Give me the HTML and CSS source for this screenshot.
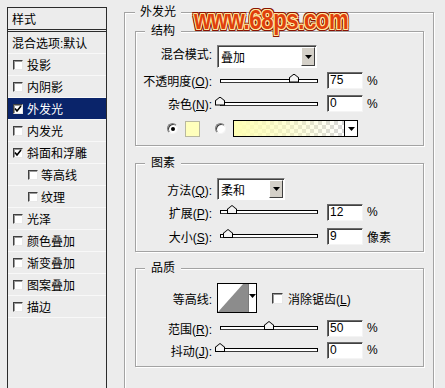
FILE: index.html
```html
<!DOCTYPE html>
<html>
<head>
<meta charset="utf-8">
<title>外发光</title>
<link rel="stylesheet" href="styles.css">
</head>
<body>
<div class="page">
  <div class="styles-panel">
    <div class="panel-head">样式</div>
    <ul class="style-list">
      <li class="style-item">混合选项:默认</li>
      <li class="style-item"><span class="cb"></span>投影</li>
      <li class="style-item"><span class="cb"></span>内阴影</li>
      <li class="style-item selected"><span class="cb"><svg viewBox="0 0 8 8" class="tick"><path d="M1 3.5 L3 6 L7 1"/></svg></span>外发光</li>
      <li class="style-item"><span class="cb"></span>内发光</li>
      <li class="style-item"><span class="cb"><svg viewBox="0 0 8 8" class="tick"><path d="M1 3.5 L3 6 L7 1"/></svg></span>斜面和浮雕</li>
      <li class="style-item sub"><span class="cb"></span>等高线</li>
      <li class="style-item sub"><span class="cb"></span>纹理</li>
      <li class="style-item"><span class="cb"></span>光泽</li>
      <li class="style-item"><span class="cb"></span>颜色叠加</li>
      <li class="style-item"><span class="cb"></span>渐变叠加</li>
      <li class="style-item"><span class="cb"></span>图案叠加</li>
      <li class="style-item"><span class="cb"></span>描边</li>
    </ul>
  </div>

  <div class="main">
    <fieldset class="group outer">
      <legend>外发光</legend>

      <fieldset class="group inner structure">
        <legend>结构</legend>
        <div class="row row-select-tall">
          <span class="lbl">混合模式:</span>
          <div class="select select-wide">
            <span class="sel-text">叠加</span>
            <span class="sel-btn"><svg viewBox="0 0 7 4" class="arrow"><path d="M0 0 H7 L3.5 4 Z"/></svg></span>
          </div>
        </div>
        <div class="row row-slider">
          <span class="lbl">不透明度(<u>O</u>):</span>
          <div class="slider"><span class="thumb" style="left:68px"></span></div>
          <span class="num">75</span><span class="unit">%</span>
        </div>
        <div class="row row-slider">
          <span class="lbl">杂色(<u>N</u>):</span>
          <div class="slider"><span class="thumb" style="left:-6px"></span></div>
          <span class="num">0</span><span class="unit">%</span>
        </div>
        <div class="row color-row">
          <span class="radio checked"></span>
          <span class="swatch"></span>
          <span class="radio radio-2"></span>
          <div class="gradient-pick">
            <span class="gradient"></span>
            <span class="grad-btn"><svg viewBox="0 0 7 4" class="arrow"><path d="M0 0 H7 L3.5 4 Z"/></svg></span>
          </div>
        </div>
      </fieldset>

      <fieldset class="group inner elements">
        <legend>图素</legend>
        <div class="row row-select">
          <span class="lbl">方法(<u>Q</u>):</span>
          <div class="select select-narrow">
            <span class="sel-text">柔和</span>
            <span class="sel-btn"><svg viewBox="0 0 7 4" class="arrow"><path d="M0 0 H7 L3.5 4 Z"/></svg></span>
          </div>
        </div>
        <div class="row row-slider row-24">
          <span class="lbl">扩展(<u>P</u>):</span>
          <div class="slider"><span class="thumb" style="left:6px"></span></div>
          <span class="num">12</span><span class="unit">%</span>
        </div>
        <div class="row row-slider row-24">
          <span class="lbl">大小(<u>S</u>):</span>
          <div class="slider"><span class="thumb" style="left:2px"></span></div>
          <span class="num">9</span><span class="unit">像素</span>
        </div>
      </fieldset>

      <fieldset class="group inner quality">
        <legend>品质</legend>
        <div class="row contour-row">
          <span class="lbl">等高线:</span>
          <div class="contour">
            <svg viewBox="0 0 30 28" class="contour-graph"><rect width="30" height="28" fill="#fff"/><path d="M0 28 L25 0 H30 V28 Z" fill="#8c8c8c"/></svg>
            <span class="contour-btn"><svg viewBox="0 0 7 4" class="arrow"><path d="M0 0 H7 L3.5 4 Z"/></svg></span>
          </div>
          <span class="cb cb-anti"></span>
          <span class="anti-text">消除锯齿(<u>L</u>)</span>
        </div>
        <div class="row row-slider row-22 first-slider">
          <span class="lbl">范围(<u>R</u>):</span>
          <div class="slider"><span class="thumb" style="left:43px"></span></div>
          <span class="num">50</span><span class="unit">%</span>
        </div>
        <div class="row row-slider row-22">
          <span class="lbl">抖动(<u>J</u>):</span>
          <div class="slider"><span class="thumb" style="left:-6px"></span></div>
          <span class="num">0</span><span class="unit">%</span>
        </div>
      </fieldset>
    </fieldset>
  </div>
</div>
<div class="watermark">www.68ps.com</div>
</body>
</html>
```

FILE: styles.css
```css
* { box-sizing: border-box; }
html, body { margin: 0; padding: 0; }
body {
  width: 445px;
  height: 388px;
  overflow: hidden;
  position: relative;
  background: #ececec;
  color: #000;
  font: 12px "Liberation Sans", "Noto Sans CJK SC", sans-serif;
}
u { text-decoration: underline; text-underline-offset: 1px; }

.page { display: flex; align-items: flex-start; height: 388px; }

/* left style list */
.styles-panel {
  margin: 7px 0 0 7px;
  width: 100px;
  height: 381px;
  border: 1px solid #2b2b2b;
  border-bottom: none;
}
.panel-head {
  height: 24px;
  line-height: 20px;
  padding: 2px 0 0 4px;
  border-bottom: 3px double #2b2b2b;
}
.style-list { list-style: none; margin: 0; padding: 0; }
.style-item {
  display: flex;
  align-items: center;
  gap: 4px;
  height: 22px;
  padding-left: 4px;
  border-bottom: 1px solid #f8f8f8;
  white-space: nowrap;
}
.style-item .cb { margin-left: 1px; }
.style-item.sub { padding-left: 19px; gap: 3px; }
.style-item.selected { background: #0a246a; color: #fff; }

.cb {
  display: inline-flex;
  align-items: center;
  justify-content: center;
  width: 10px;
  height: 10px;
  flex: none;
  background: #fff;
  border: 1px solid;
  border-color: #404040 #e8e8e8 #e8e8e8 #404040;
  box-shadow: inset 1px 1px 0 #9a9a9a;
}
.tick { width: 8px; height: 8px; fill: none; stroke: #000; stroke-width: 1.6; }

/* right settings */
.main { margin-left: 17px; }
.group {
  margin: 0;
  border: 1px solid #a3a3a3;
  box-shadow: inset 1px 1px 0 #fff, 1px 1px 0 #fff;
  min-width: 0;
}
.group > legend {
  line-height: 15px;
  height: 15px;
  background: #ececec;
}
.outer {
  margin-top: 5px;
  width: 310px;
  height: 400px;
  padding: 4px 9px 0 10px;
}
.outer > legend { padding: 0 5px; margin-left: 0; }
.inner { width: 289px; padding: 0 0 0 0; }
.inner > legend { padding: 0 6px; margin-left: 9px; }

.structure { padding-top: 6px; padding-bottom: 8px; }
.elements { margin-top: 10px; padding-top: 7px; padding-bottom: 3px; }
.quality { margin-top: 9px; padding-top: 7px; padding-bottom: 5px; }

.row { display: flex; align-items: center; height: 23px; white-space: nowrap; }
.row-select-tall { height: 24px; align-items: flex-start; }
.row-select { height: 22px; }
.row-24 { height: 24px; }
.row-22 { height: 22px; }
.first-slider { margin-top: 4px; }

.lbl { width: 76px; margin-right: 5px; text-align: right; flex: none; }

.select {
  display: flex;
  align-items: center;
  background: #fff;
  border: 1px solid;
  border-color: #808080 #fff #fff #808080;
  box-shadow: inset 1px 1px 0 #404040;
  padding: 1px 1px 1px 2px;
}
.select-wide { width: 100px; height: 23px; }
.select-narrow { width: 68px; height: 22px; }
.sel-text { flex: 1; padding-left: 1px; }
.sel-btn {
  display: flex;
  align-items: center;
  justify-content: center;
  width: 14px;
  height: 100%;
  background: #d4d0c8;
  border: 1px solid;
  border-color: #fff #404040 #404040 #fff;
}
.arrow { width: 7px; height: 4px; fill: #000; }

.slider {
  position: relative;
  width: 98px;
  height: 4px;
  margin: 0 9px 0 3px;
  background: #fff;
  border: 1px solid #000;
  border-bottom-color: #3a3a3a;
  flex: none;
}
.thumb {
  position: absolute;
  top: -6px;
  width: 10px;
  height: 9px;
  background: #000;
  clip-path: polygon(0 45%, 50% 0, 100% 45%, 100% 100%, 0 100%);
}
.thumb::after {
  content: "";
  position: absolute;
  left: 1px;
  top: 1px;
  width: 8px;
  height: 7px;
  background: #f4f4f4;
  clip-path: polygon(0 45%, 50% 0, 100% 45%, 100% 100%, 0 100%);
}

.num {
  width: 36px;
  height: 17px;
  flex: none;
  line-height: 14px;
  padding-left: 2px;
  background: #fff;
  border: 1px solid;
  border-color: #6a6a6a #f4f4f4 #f4f4f4 #6a6a6a;
  box-shadow: inset 1px 1px 0 #404040;
}
.unit { margin-left: 4px; }

.color-row { height: 17px; margin-top: 5px; padding-left: 31px; }
.radio {
  width: 11px;
  height: 11px;
  border-radius: 50%;
  background: #fff;
  border: 1px solid;
  border-color: #808080 #f4f4f4 #f4f4f4 #808080;
  box-shadow: inset 1px 1px 0 #404040;
  display: flex;
  align-items: center;
  justify-content: center;
  flex: none;
}
.radio.checked::after {
  content: "";
  width: 4px;
  height: 4px;
  border-radius: 50%;
  background: #000;
}
.swatch {
  width: 15px;
  height: 16px;
  margin-left: 7px;
  margin-top: 1px;
  background: #ffffbc;
  border: 1px solid #b8b8a0;
}
.radio-2 { margin-left: 15px; }
.gradient-pick {
  display: flex;
  width: 125px;
  height: 17px;
  margin-left: 7px;
  border: 1px solid #000;
  background: #fff;
}
.gradient {
  flex: 1;
  background:
    linear-gradient(to right, #ffffb4 0%, rgba(255,255,180,0.6) 45%, rgba(255,255,180,0) 100%),
    repeating-conic-gradient(#d8d8d8 0 25%, #ffffff 0 50%) 0 0 / 8px 8px;
}
.grad-btn {
  width: 13px;
  display: flex;
  align-items: center;
  justify-content: center;
  border-left: 1px solid #000;
  background: #fff;
}

.contour-row { height: 30px; }
.contour {
  display: flex;
  width: 40px;
  height: 30px;
  border: 1px solid #000;
  background: #fff;
}
.contour-graph { width: 30px; height: 28px; display: block; }
.contour-btn {
  flex: 1;
  display: flex;
  justify-content: center;
  padding-top: 10px;
  border-left: 1px solid #7a7a7a;
}
.cb-anti { width: 11px; height: 11px; margin-left: 15px; }
.anti-text { margin-left: 5px; }

.watermark {
  position: absolute;
  left: 194px;
  top: 7px;
  font: bold 27px/27px "Liberation Sans", sans-serif;
  color: #e0400c;
  transform: scaleX(0.82);
  transform-origin: left top;
  letter-spacing: -0.5px;
  text-shadow:
    1px 0 #ffe8a0, -1px 0 #ffe8a0, 0 1px #ffe8a0, 0 -1px #ffe8a0,
    1px 1px #ffe8a0, -1px -1px #ffe8a0, 1px -1px #ffe8a0, -1px 1px #ffe8a0,
    2px 0 #8a1200, -2px 0 #8a1200, 0 2px #8a1200, 0 -2px #8a1200,
    2px 2px #8a1200, -2px -2px #8a1200, 2px -2px #8a1200, -2px 2px #8a1200;
}
```
